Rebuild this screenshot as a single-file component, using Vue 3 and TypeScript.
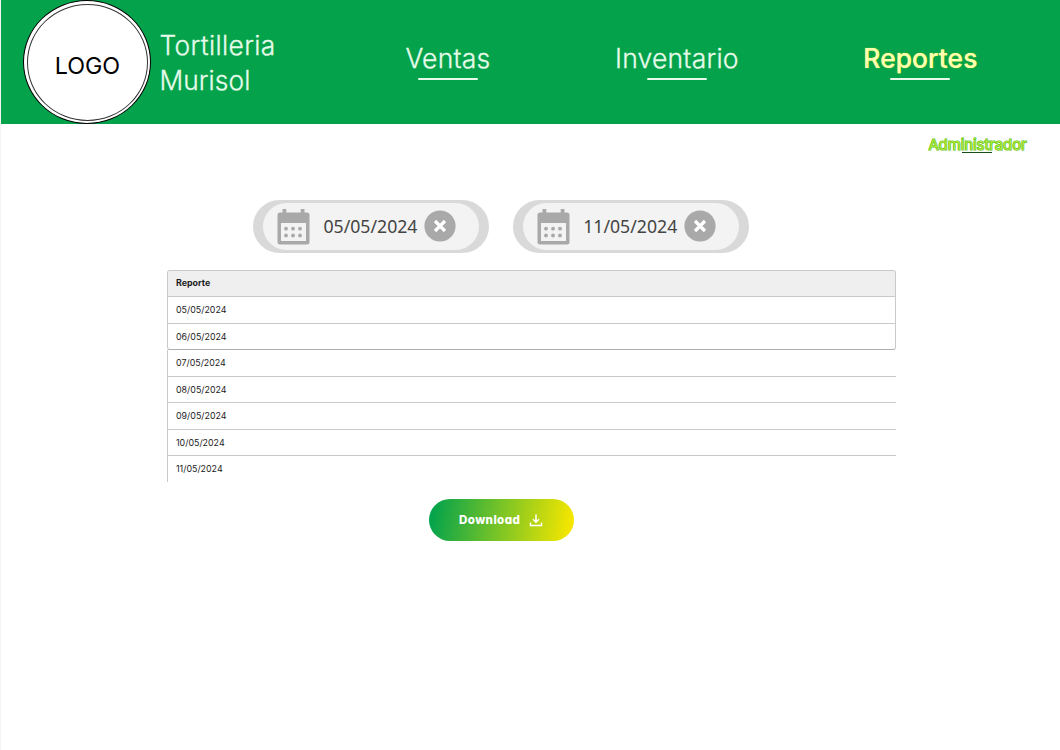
<script setup lang="ts">
interface NavItem {
  label: string
  key: string
  active?: boolean
}

const nav: NavItem[] = [
  { label: 'Ventas', key: 'sales' },
  { label: 'Inventario', key: 'stock' },
  { label: 'Reportes', key: 'reports', active: true },
]
const range: string[] = ['05/05/2024', '11/05/2024']
const cardRows: string[] = ['05/05/2024', '06/05/2024']
const moreRows: string[] = ['07/05/2024', '08/05/2024', '09/05/2024', '10/05/2024', '11/05/2024']
const dotX = [9, 16, 23]
const dotY = [19.7, 26.5]
</script>

<template>
  <div class="page">
    <header class="top">
      <div class="logo"><div class="logo-inner"><span>LOGO</span></div></div>
      <div class="brand"><span class="b1">Tortilleria</span><br /><span class="b2">Murisol</span></div>
      <nav class="nav">
        <a v-for="n in nav" :key="n.key" class="nav-item" :class="[n.key, { active: n.active }]">
          <span class="nav-label">{{ n.label }}</span>
          <i class="bar"></i>
        </a>
      </nav>
    </header>

    <div class="role"><span class="role-name">Administrador</span><i class="role-line"></i></div>

    <main class="content">
      <div class="filters">
        <div v-for="d in range" :key="d" class="pill">
          <div class="pill-inner">
            <svg class="cal" width="33" height="36" viewBox="0 0 33 36">
              <path d="M3 3.500h27q2.500 0 2.500 2.500V33q0 2.500-2.500 2.500H3Q.5 35.500.5 33V6Q.5 3.500 3 3.500Z" fill="#a9a9a9" />
              <path d="M5.500 0h3.800v4.500H5.500zM23.700 0h3.800v4.500h-3.800z" fill="#a9a9a9" />
              <path d="M4 14h25V32H4z" fill="#f3f3f3" />
              <template v-for="y in dotY" :key="y">
                <circle v-for="x in dotX" :key="x" :cx="x" :cy="y" r="1.900" fill="#a9a9a9" />
              </template>
            </svg>
            <span class="date">{{ d }}</span>
            <svg class="clear" width="32" height="32" viewBox="0 0 32 32">
              <circle cx="16" cy="16" r="15.600" fill="#a9a9a9" />
              <path d="M11 11l10 10M21 11L11 21" stroke="#fff" stroke-width="3.200" />
            </svg>
          </div>
        </div>
      </div>

      <section class="table">
        <div class="card">
          <div class="row head">Reporte</div>
          <div v-for="r in cardRows" :key="r" class="row">{{ r }}</div>
        </div>
        <div class="rest">
          <div v-for="r in moreRows" :key="r" class="row">{{ r }}</div>
        </div>
      </section>

      <button class="download">
        <span>Download</span>
        <svg width="14" height="13" viewBox="0 0 14 13" fill="none" stroke="#fff" stroke-width="1.500">
          <path d="M7 .5v7.500M4 5.300l3 3 3-3M1.500 8.500v3h11v-3" />
        </svg>
      </button>
    </main>
  </div>
</template>

<style>
body {
  margin: 0;
  background: #fff;
}
</style>

<style scoped>
.page {
  box-sizing: border-box;
  width: 1060px;
  height: 750px;
  overflow: hidden;
  border-left: 1px solid #f4f4f4;
  background: #fff;
  font-family: Inter, "Liberation Sans", sans-serif;
}
.top {
  display: flex;
  height: 124px;
  background: #03a24b;
  color: #e6fbe9;
}
.logo {
  box-sizing: border-box;
  flex: none;
  width: 128px;
  height: 124px;
  margin-left: 22.400px;
  padding: 2.500px;
  border: 1.500px solid #000;
  border-radius: 50%;
  background: #fff;
}
.logo-inner {
  box-sizing: border-box;
  height: 100%;
  border: 1px solid #333;
  border-radius: 50%;
  color: #000;
  font-size: 23.300px;
  line-height: 121px;
  text-align: center;
}
.brand {
  flex: none;
  width: 150px;
  margin-left: 8px;
  padding-top: 29px;
  font-size: 26.300px;
  font-weight: 300;
  letter-spacing: 0.400px;
  line-height: 34.500px;
  white-space: nowrap;
  -webkit-text-stroke: 0.300px #e6fbe9;
}
.b2 {
  letter-spacing: 0.100px;
}
.nav {
  display: grid;
  grid-template-columns: 200px 200px 200px;
  column-gap: 29px;
  margin-left: 38.500px;
  padding-top: 41px;
}
.nav-item {
  display: flex;
  flex-direction: column;
  align-items: center;
  font-size: 26.500px;
  font-weight: 300;
  letter-spacing: 0.200px;
  line-height: 34px;
}
.nav-label {
  -webkit-text-stroke: 0.300px #e6fbe9;
}
.reports {
  margin-left: 14.500px;
  margin-right: -14.500px;
}
.active .nav-label {
  color: #ffffb4;
  font-weight: 500;
  letter-spacing: 0;
  text-shadow: 0 0 1px #f5ee16;
  -webkit-text-stroke: 0;
}
.bar {
  width: 60px;
  height: 2px;
  margin-top: 3px;
  border-radius: 1px;
  background: #e6fbe9;
}
.role {
  display: flex;
  flex-direction: column;
  align-items: center;
  width: 100px;
  height: 76px;
  margin-left: 926.500px;
}
.role-name {
  margin-top: 11px;
  color: #b4e63c;
  font-size: 15px;
  letter-spacing: -0.100px;
  line-height: 20px;
  -webkit-text-stroke: 1.200px #50c414;
  paint-order: stroke fill;
}
.role-line {
  width: 30px;
  height: 1px;
  margin-top: -3px;
  margin-right: 2px;
  background: #174c1c;
}
.content {
  display: flex;
  flex-direction: column;
}
.filters {
  display: flex;
  gap: 23.800px;
  margin-left: 252.400px;
}
.pill {
  box-sizing: border-box;
  width: 236px;
  height: 53px;
  padding: 3px 10px;
  border-radius: 27px;
  background: #d9d9d9;
}
.pill-inner {
  display: flex;
  align-items: center;
  height: 47px;
  border-radius: 24px;
  background: #f3f3f3;
}
.cal {
  flex: none;
  margin: 0 0 0 13.500px;
}
.date {
  flex: none;
  width: 101px;
  margin: -1px 0 0 13.500px;
  color: #444;
  font-family: "Noto Sans", "Open Sans", sans-serif;
  font-size: 17.700px;
  line-height: 24px;
}
.clear {
  margin: -1px 0 0 -0.500px;
}
.table {
  width: 729px;
  margin: 17px 0 0 166px;
  color: #1c1c1c;
  font-size: 8.900px;
}
.card {
  box-sizing: border-box;
  height: 80px;
  overflow: hidden;
  border: 1px solid #c9c9c9;
  border-bottom-color: #aeaeae;
  border-radius: 3px;
}
.row {
  box-sizing: border-box;
  height: 26.550px;
  padding-left: 8px;
  border-bottom: 1px solid #c9c9c9;
  line-height: 25.500px;
}
.head {
  height: 26px;
  background: #efefef;
  font-weight: 700;
  line-height: 24.500px;
}
.card .row:last-child,
.rest .row:last-child {
  border-bottom: 0;
}
.rest {
  height: 132px;
  border-left: 1px solid #c9c9c9;
}
.download {
  display: flex;
  align-items: center;
  box-sizing: border-box;
  width: 145px;
  height: 42px;
  margin: 17px 0 0 428px;
  padding: 0 0 0 30px;
  border: 0;
  border-radius: 21px;
  background: linear-gradient(100deg, #05a34b 4%, #f4e600 96%);
  color: #fff;
  font-family: Inter, sans-serif;
  font-feature-settings: "cv11";
  font-size: 11.600px;
  font-weight: 800;
  letter-spacing: 0.400px;
}
.download svg {
  margin-left: 8.500px;
}
</style>
